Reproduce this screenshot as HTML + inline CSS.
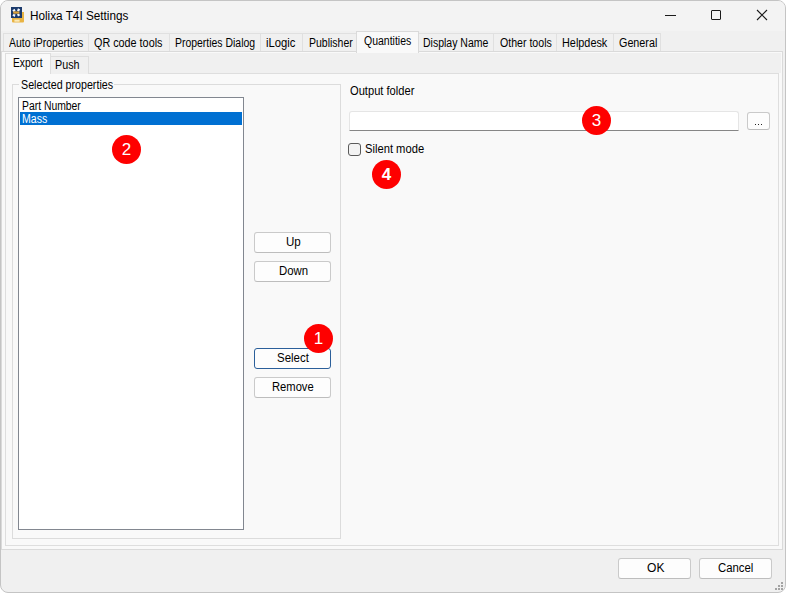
<!DOCTYPE html>
<html><head><meta charset="utf-8">
<style>
html,body{margin:0;padding:0;width:786px;height:593px;overflow:hidden;background:#ffffff;}
*{box-sizing:border-box;}
.f{font-family:"Liberation Sans",sans-serif;color:#000;}
.a{position:absolute;}
#win{position:absolute;left:0;top:0;width:786px;height:593px;border:1px solid #c4c4c4;border-radius:8px;background:#f0f0f0;overflow:hidden;}
#title{position:absolute;left:0;top:0;width:784px;height:30px;background:#f3f3f3;}
.t{position:absolute;font-family:"Liberation Sans",sans-serif;font-size:12px;white-space:nowrap;line-height:14px;color:#000;transform-origin:0 0;}
.tab{position:absolute;top:33px;height:18px;border:1px solid #e0e0e0;border-bottom:none;background:#f0f0f0;}
.btn{position:absolute;border:1px solid #cacaca;border-bottom-color:#bdbdbd;border-radius:3px;background:#fdfdfd;}
.badge{position:absolute;width:29px;height:29px;border-radius:50%;background:#fe0000;color:#fff;font-family:"Liberation Sans",sans-serif;font-size:17px;line-height:29px;text-align:center;}
</style></head>
<body>
<div id="win"></div>
<!-- title bar -->
<div class="a" style="left:1px;top:1px;width:784px;height:30px;background:#f3f3f3;border-radius:7px 7px 0 0;"></div>
<!-- icon -->
<svg class="a" style="left:9px;top:5px;" width="17" height="19" viewBox="9 5 17 19">
<path d="M12 12H24V21.5Q24 22.6 22.9 22.6H13.1Q12 22.6 12 21.5Z" fill="#e9b444"/>
<rect x="11" y="7" width="11" height="11" fill="#1b3a6c"/>
<path d="M12.4 10.2L14.6 8.8L15.6 11.0L13.4 12.0Z" fill="#f4f7fb"/>
<path d="M20.2 9.4L18.0 8.2L17.0 10.8L19.0 11.4Z" fill="#f4f7fb"/>
<path d="M12.4 15.4L14.6 17.0L15.6 14.4L13.4 14.0Z" fill="#f4f7fb"/>
<path d="M20.2 15.2L18.0 16.6L17.0 14.2L19.0 13.8Z" fill="#f4f7fb"/>
<rect x="13.2" y="11.4" width="6.2" height="2.3" fill="#dca13a"/>
<rect x="14.4" y="19.6" width="5.2" height="2.1" fill="#fbe9b8"/>
</svg>
<!-- window controls -->
<div class="a" style="left:665px;top:15px;width:11px;height:1px;background:#1a1a1a;"></div>
<div class="a" style="left:711px;top:10px;width:10px;height:10px;border:1px solid #1a1a1a;border-radius:1px;"></div>
<svg class="a" style="left:756px;top:9px;" width="12" height="12" viewBox="0 0 12 12"><path d="M1 1L11 11M11 1L1 11" stroke="#1a1a1a" stroke-width="1.1"/></svg>

<!-- main tab page -->
<div class="a" style="left:1px;top:51px;width:782px;height:499px;border:1px solid #dadada;background:#f9f9f9;"></div>
<!-- main tabs -->
<div class="tab" style="left:3px;width:86px;"></div>
<div class="tab" style="left:88px;width:82px;"></div>
<div class="tab" style="left:169px;width:92px;"></div>
<div class="tab" style="left:260px;width:43px;"></div>
<div class="tab" style="left:302px;width:55px;"></div>
<div class="tab" style="left:418px;width:76px;"></div>
<div class="tab" style="left:493px;width:64px;"></div>
<div class="tab" style="left:556px;width:58px;"></div>
<div class="tab" style="left:613px;width:48px;"></div>
<div class="a" style="left:356px;top:31px;width:63px;height:22px;border:1px solid #dadada;border-bottom:none;background:#f9f9f9;"></div>

<!-- nested tab control header strip -->
<div class="a" style="left:5px;top:53px;width:776px;height:20px;background:#f0f0f0;"></div>
<!-- nested page -->
<div class="a" style="left:5px;top:73px;width:774px;height:473px;border:1px solid #dedede;background:#f9f9f9;"></div>
<div class="a" style="left:50px;top:56px;width:39px;height:18px;border:1px solid #dedede;border-bottom:none;background:#f0f0f0;"></div>
<div class="a" style="left:5px;top:53px;width:46px;height:21px;border:1px solid #dedede;border-bottom:none;background:#f9f9f9;"></div>

<!-- group box -->
<div class="a" style="left:12px;top:84px;width:329px;height:455px;border:1px solid #dcdcdc;"></div>
<div class="a" style="left:19px;top:78px;width:95px;height:12px;background:#f9f9f9;"></div>

<!-- listbox -->
<div class="a" style="left:18px;top:97px;width:226px;height:433px;border:1px solid #828790;background:#fff;"></div>
<div class="a" style="left:20px;top:112px;width:222px;height:13px;background:#0070d2;"></div>

<!-- buttons -->
<div class="btn" style="left:254px;top:232px;width:77px;height:21px;"></div>
<div class="btn" style="left:254px;top:261px;width:77px;height:21px;"></div>
<div class="btn" style="left:254px;top:348px;width:77px;height:21px;border-color:#2b5f9a;"></div>
<div class="btn" style="left:254px;top:377px;width:77px;height:21px;"></div>

<!-- output folder -->
<div class="a" style="left:349px;top:111px;width:390px;height:20px;border:1px solid #e5e5e5;border-bottom:1px solid #868686;border-radius:3px 3px 0 0;background:#fff;"></div>
<div class="btn" style="left:747px;top:112px;width:23px;height:18px;"></div>
<div class="a" style="left:755px;top:124px;width:1px;height:1px;background:#222;"></div><div class="a" style="left:758px;top:124px;width:1px;height:1px;background:#222;"></div><div class="a" style="left:761px;top:124px;width:1px;height:1px;background:#222;"></div>

<!-- checkbox -->
<div class="a" style="left:348px;top:143px;width:13px;height:13px;border:1px solid #5a5a5a;border-radius:3px;background:#f3f3f3;"></div>

<!-- OK / Cancel -->
<div class="btn" style="left:618px;top:558px;width:73px;height:21px;"></div>
<div class="btn" style="left:699px;top:558px;width:73px;height:21px;"></div>

<!-- grip -->
<div class="a" style="left:781px;top:582px;width:2px;height:2px;background:#a3a3a3;"></div><div class="a" style="left:778px;top:585px;width:2px;height:2px;background:#a3a3a3;"></div><div class="a" style="left:781px;top:585px;width:2px;height:2px;background:#a3a3a3;"></div><div class="a" style="left:775px;top:588px;width:2px;height:2px;background:#a3a3a3;"></div><div class="a" style="left:778px;top:588px;width:2px;height:2px;background:#a3a3a3;"></div><div class="a" style="left:781px;top:588px;width:2px;height:2px;background:#a3a3a3;"></div>
<!-- badges -->
<div class="badge" style="left:304px;top:324px;">1</div>
<div class="badge" style="left:112px;top:135px;">2</div>
<div class="badge" style="left:582px;top:106px;">3</div>
<div class="badge" style="left:372px;top:160px;font-weight:bold;">4</div>
<div class="t" style="left:30.02px;top:9px;font-size:12px;color:#000;transform:scaleX(0.9788);">Holixa T4I Settings</div>
<div class="t" style="left:9.20px;top:36px;font-size:12px;color:#000;transform:scaleX(0.8703);">Auto iProperties</div>
<div class="t" style="left:94.10px;top:36px;font-size:12px;color:#000;transform:scaleX(0.9000);">QR code tools</div>
<div class="t" style="left:174.73px;top:36px;font-size:12px;color:#000;transform:scaleX(0.8700);">Properties Dialog</div>
<div class="t" style="left:265.76px;top:36px;font-size:12px;color:#000;transform:scaleX(0.9373);">iLogic</div>
<div class="t" style="left:308.93px;top:36px;font-size:12px;color:#000;transform:scaleX(0.8743);">Publisher</div>
<div class="t" style="left:363.73px;top:34px;font-size:12px;color:#000;transform:scaleX(0.8736);">Quantities</div>
<div class="t" style="left:422.92px;top:36px;font-size:12px;color:#000;transform:scaleX(0.8753);">Display Name</div>
<div class="t" style="left:499.62px;top:36px;font-size:12px;color:#000;transform:scaleX(0.8825);">Other tools</div>
<div class="t" style="left:562.09px;top:36px;font-size:12px;color:#000;transform:scaleX(0.9055);">Helpdesk</div>
<div class="t" style="left:618.60px;top:36px;font-size:12px;color:#000;transform:scaleX(0.8976);">General</div>
<div class="t" style="left:12.95px;top:56px;font-size:12px;color:#000;transform:scaleX(0.8513);">Export</div>
<div class="t" style="left:54.90px;top:58px;font-size:12px;color:#000;transform:scaleX(0.8960);">Push</div>
<div class="t" style="left:20.91px;top:78px;font-size:12px;color:#000;transform:scaleX(0.8902);">Selected properties</div>
<div class="t" style="left:21.84px;top:99px;font-size:12px;color:#000;transform:scaleX(0.8642);">Part Number</div>
<div class="t" style="left:21.92px;top:112px;font-size:12px;color:#fff;transform:scaleX(0.8778);">Mass</div>
<div class="t" style="left:286.04px;top:235px;font-size:12px;color:#000;transform:scaleX(0.9643);">Up</div>
<div class="t" style="left:278.75px;top:264px;font-size:12px;color:#000;transform:scaleX(0.9497);">Down</div>
<div class="t" style="left:276.54px;top:351px;font-size:12px;color:#000;transform:scaleX(0.9563);">Select</div>
<div class="t" style="left:271.87px;top:380px;font-size:12px;color:#000;transform:scaleX(0.9326);">Remove</div>
<div class="t" style="left:350.37px;top:84px;font-size:12px;color:#000;transform:scaleX(0.9279);">Output folder</div>
<div class="t" style="left:364.87px;top:142px;font-size:12px;color:#000;transform:scaleX(0.9331);">Silent mode</div>
<div class="t" style="left:647.19px;top:561px;font-size:12px;color:#000;transform:scaleX(1.0062);">OK</div>
<div class="t" style="left:718.25px;top:561px;font-size:12px;color:#000;transform:scaleX(0.9472);">Cancel</div>
</body></html>
